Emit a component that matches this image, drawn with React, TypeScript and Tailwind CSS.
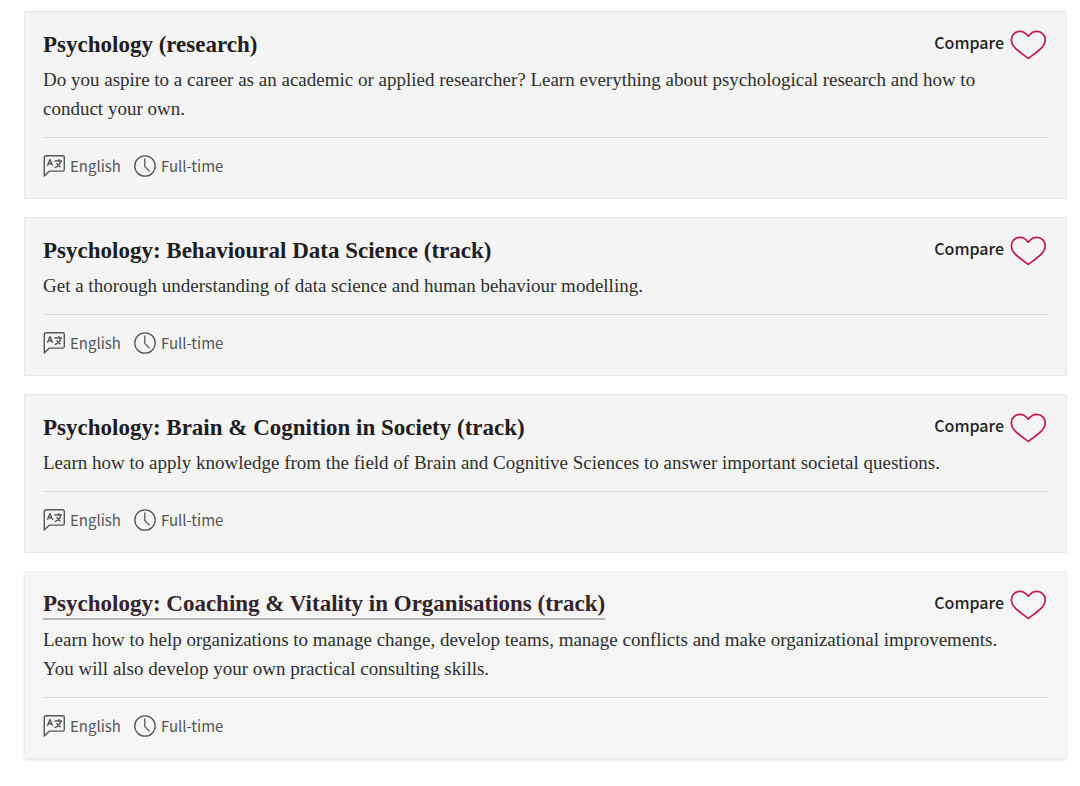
import { useState } from "react";
import clsx from "clsx";

type Programme = {
  title: string;
  description: string;
  language: string;
  mode: string;
  active?: boolean;
};

const programmes: Programme[] = [
  {
    title: "Psychology (research)",
    description:
      "Do you aspire to a career as an academic or applied researcher? Learn everything about psychological research and how to conduct your own.",
    language: "English",
    mode: "Full-time",
  },
  {
    title: "Psychology: Behavioural Data Science (track)",
    description: "Get a thorough understanding of data science and human behaviour modelling.",
    language: "English",
    mode: "Full-time",
  },
  {
    title: "Psychology: Brain & Cognition in Society (track)",
    description:
      "Learn how to apply knowledge from the field of Brain and Cognitive Sciences to answer important societal questions.",
    language: "English",
    mode: "Full-time",
  },
  {
    title: "Psychology: Coaching & Vitality in Organisations (track)",
    description:
      "Learn how to help organizations to manage change, develop teams, manage conflicts and make organizational improvements. You will also develop your own practical consulting skills.",
    language: "English",
    mode: "Full-time",
    active: true,
  },
];

function HeartIcon({ filled }: { filled: boolean }) {
  return (
    <svg
      viewBox="0 0 36 30"
      className="h-[30px] w-9"
      fill={filled ? "currentColor" : "none"}
      stroke="currentColor"
      strokeWidth="1.7"
      strokeLinejoin="round"
      aria-hidden="true"
    >
      <path d="M18.3 6.2C15.8 3 13.2 1.4 9.8 1.4C5 1.4 1.4 5 1.4 9.7C1.4 13.2 2.8 15.8 5.8 18.6C9.6 22.2 14 25.2 18.3 28.4C22.6 25.2 27 22.2 30.8 18.6C33.8 15.8 35.2 13.2 35.2 9.7C35.2 5 31.6 1.4 26.8 1.4C23.4 1.4 20.8 3 18.3 6.2Z" />
    </svg>
  );
}

function LanguageIcon() {
  return (
    <svg
      viewBox="0 0 22 22"
      className="size-[22px]"
      fill="none"
      stroke="currentColor"
      strokeWidth="1.4"
      strokeLinejoin="round"
      aria-hidden="true"
    >
      <path d="M3.2 0.8H19.6Q21.3 0.8 21.3 2.5V14.4Q21.3 16.1 19.6 16.1H6.4L1.3 21V2.6Q1.3 0.8 3.2 0.8Z" />
      <path d="M4.4 10.8L7 4.6L9.6 10.8M5.4 8.8H8.6" />
      <path d="M11.4 6H19M15.8 4L16 6M17.8 6C17.2 9 15 11.6 11.6 12.6M13.6 8.2C14.4 10 15.8 11.4 17.6 12.2" />
    </svg>
  );
}

function ClockIcon() {
  return (
    <svg
      viewBox="0 0 22 22"
      className="size-[22px]"
      fill="none"
      stroke="currentColor"
      strokeWidth="1.3"
      aria-hidden="true"
    >
      <circle cx="11" cy="11" r="10.2" />
      <path d="M10.8 3.6V11.6L15.6 16.4" />
    </svg>
  );
}

function ProgrammeCard({ programme }: { programme: Programme }) {
  const [saved, setSaved] = useState(false);

  return (
    <article
      className={clsx(
        "rounded-xs border px-[18px] pt-[19px] pb-5",
        programme.active ? "border-[#ececec] bg-[#f5f5f5] shadow-sm" : "border-[#e6e6e6] bg-[#f4f4f4]",
      )}
    >
      <div className="flex h-7 items-center justify-between gap-4">
        <h2 className="font-['Liberation_Serif',serif] text-[23px] leading-7 font-bold text-[#1f1d21]">
          <a
            href="#"
            className={clsx("inline-block", programme.active && "border-b-2 border-[#bdb3b6] text-[#35222a]")}
          >
            {programme.title}
          </a>
        </h2>
        <button
          type="button"
          aria-pressed={saved}
          onClick={() => setSaved(!saved)}
          className="flex shrink-0 cursor-pointer items-start gap-1.5 pr-0.5"
        >
          <span className="text-base leading-6 font-medium text-[#222]">Compare</span>
          <span className="text-[#c31a47]">
            <HeartIcon filled={saved} />
          </span>
        </button>
      </div>
      <p className="mt-1.5 pr-6 font-['Liberation_Serif',serif] text-[19px] leading-[29px] text-[#2f2f2f]">
        {programme.description}
      </p>
      <ul className="mt-3.5 flex gap-[13px] border-t border-[#d8d8d8] pt-4 text-[15px] leading-6 text-[#555]">
        <li className="flex items-center gap-[5px]">
          <LanguageIcon />
          {programme.language}
        </li>
        <li className="flex items-center gap-[5px]">
          <ClockIcon />
          {programme.mode}
        </li>
      </ul>
    </article>
  );
}

export default function App() {
  return (
    <main className="flex flex-col gap-[18px] bg-white pt-[11px] pr-[13px] pb-6 pl-6 font-['Noto_Sans_CJK_SC',sans-serif]">
      {programmes.map((programme) => (
        <ProgrammeCard key={programme.title} programme={programme} />
      ))}
    </main>
  );
}
